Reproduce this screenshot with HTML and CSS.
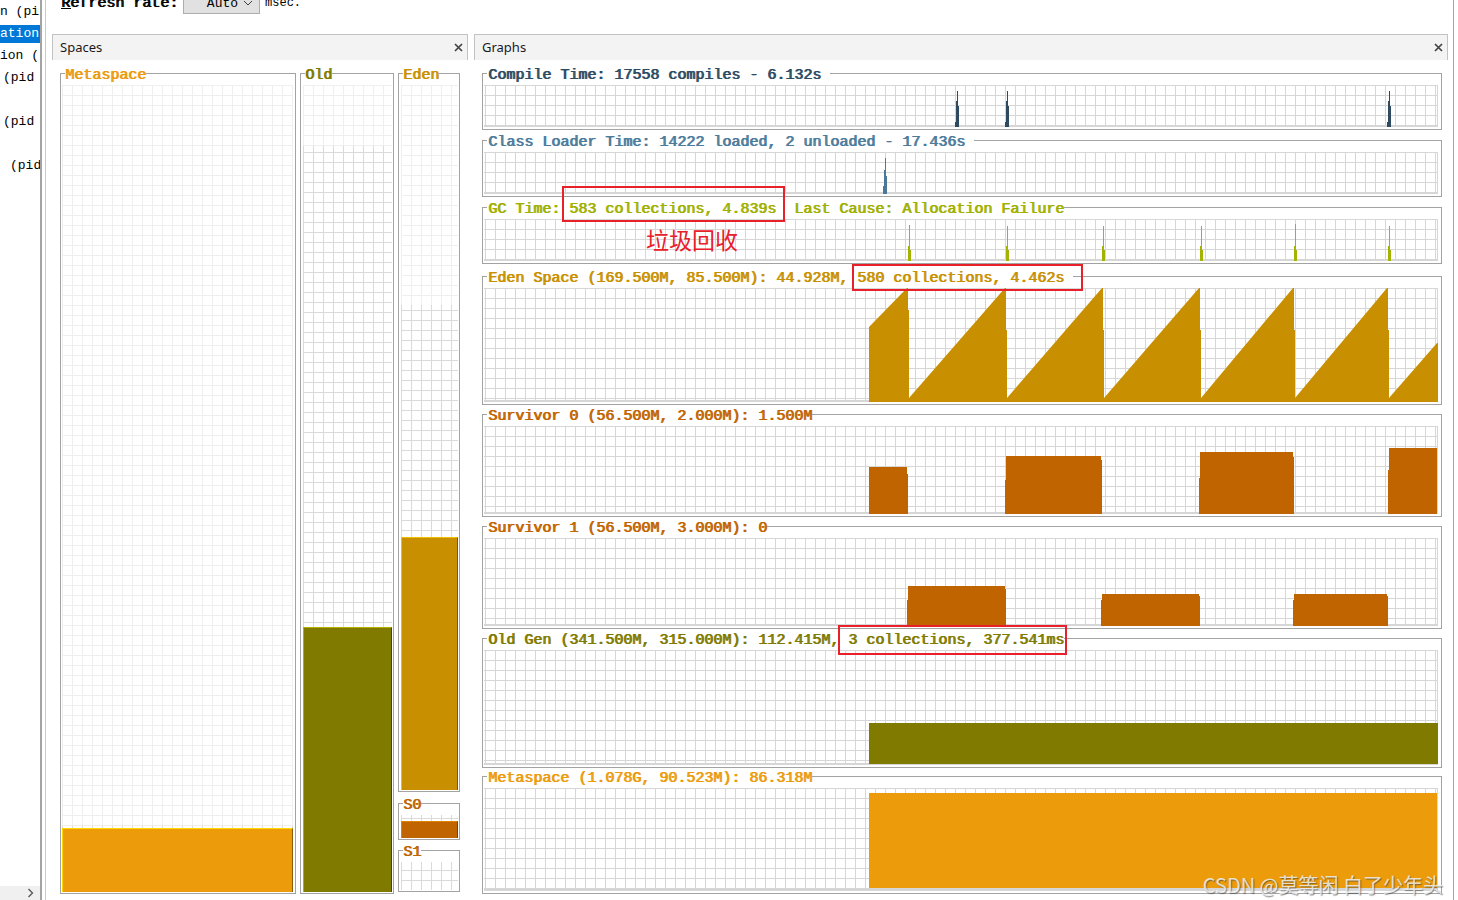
FILE: index.html
```html
<!DOCTYPE html>
<html>
<head>
<meta charset="utf-8">
<link rel="stylesheet" href="styles.css">
</head>
<body>
<div class="app">
  <aside class="sidebar">
    <div class="tree">
      <div class="item"><span class="row">n (pi</span></div>
      <div class="item sel"><span class="row">ation</span></div>
      <div class="item"><span class="row">ion (</span></div>
      <div class="item"><span class="row ind3">(pid</span></div>
      <div class="item"></div>
      <div class="item"><span class="row ind3">(pid</span></div>
      <div class="item"></div>
      <div class="item"><span class="row ind10">(pid</span></div>
    </div>
    <div class="side-foot">
      <svg width="7" height="10" viewBox="0 0 7 10"><path d="M1.5 1 L5.5 5 L1.5 9" fill="none" stroke="#555" stroke-width="1.3"/></svg>
    </div>
  </aside>
  <div class="divider"></div>
  <main class="main">
    <div class="toolbar">
      <span class="lbl"><u>R</u>efresh rate:</span>
      <span class="combo"><span>Auto</span><svg width="10" height="6" viewBox="0 0 10 6"><path d="M1 1 L5 5 L9 1" fill="none" stroke="#444" stroke-width="1"/></svg></span>
      <span class="unit">msec.</span>
    </div>
    <div class="panels">
      <section class="panel spaces">
        <header class="phead"><span>Spaces</span><svg class="close" width="9" height="9" viewBox="0 0 9 9"><path d="M1 1 L8 8 M8 1 L1 8" stroke="#444" stroke-width="1.7"/></svg></header>
        <div class="spaces-body">
          <div class="tb col-meta">
            <div class="tb-head"><span class="tb-title c-meta">Metaspace</span></div>
            <div class="tb-body sb-l"><div class="sgrid sg-big"><div class="commit cm-meta"><div class="fill f-meta"></div></div></div></div>
          </div>
          <div class="tb col-old">
            <div class="tb-head"><span class="tb-title c-old">Old</span></div>
            <div class="tb-body sb-r"><div class="sgrid sg-big"><div class="commit cm-old"><div class="fill f-old"></div></div></div></div>
          </div>
          <div class="eden-col">
            <div class="tb">
              <div class="tb-head"><span class="tb-title c-eden">Eden</span></div>
              <div class="tb-body sb-r"><div class="sgrid sg-eden"><div class="commit cm-eden"><div class="fill f-eden"></div></div></div></div>
            </div>
            <div class="tb s0">
              <div class="tb-head"><span class="tb-title c-surv">S0</span></div>
              <div class="tb-body sb-r"><div class="sgrid sg-s0"><div class="commit cm-full"><div class="fill f-s0"></div></div></div></div>
            </div>
            <div class="tb s1">
              <div class="tb-head"><span class="tb-title c-surv">S1</span></div>
              <div class="tb-body sb-r"><div class="sgrid sg-s1"><div class="commit cm-full"></div></div></div>
            </div>
          </div>
        </div>
      </section>

      <section class="panel graphs">
        <header class="phead"><span>Graphs</span><svg class="close" width="9" height="9" viewBox="0 0 9 9"><path d="M1 1 L8 8 M8 1 L1 8" stroke="#444" stroke-width="1.7"/></svg></header>
        <div class="graphs-body">
          <div class="tb">
            <div class="tb-head"><span class="tb-title gt t-compile">Compile Time: 17558 compiles - 6.132s </span></div>
            <div class="tb-body"><div class="ggrid h42">
              <svg viewBox="484 85 954 42" preserveAspectRatio="none"><g fill="#2d4a61">
                <polygon points="955,127 955,122 956,122 956,101 957,101 957,91 958,91 958,106 959,106 959,127"/>
                <polygon points="1005,127 1005,122 1006,122 1006,101 1007,101 1007,91 1008,91 1008,106 1009,106 1009,127"/>
                <polygon points="1387,127 1387,122 1388,122 1388,101 1389,101 1389,91 1390,91 1390,106 1391,106 1391,127"/>
              </g></svg>
            </div></div>
          </div>

          <div class="tb m4">
            <div class="tb-head"><span class="tb-title gt t-class">Class Loader Time: 14222 loaded, 2 unloaded - 17.436s </span></div>
            <div class="tb-body"><div class="ggrid h42">
              <svg viewBox="484 152 954 42" preserveAspectRatio="none"><g fill="#4b7a99">
                <polygon points="883,194 883,186 884,186 884,170 885,170 885,158 886,158 886,176 887,176 887,194"/>
              </g></svg>
            </div></div>
          </div>

          <div class="tb m4">
            <div class="tb-head"><span class="tb-title gt t-gc">GC Time: <span class="mark mark-gc">583 collections, 4.839s</span>  Last Cause: Allocation Failure</span></div>
            <div class="tb-body"><div class="ggrid h42 rel">
              <svg viewBox="484 219 954 42" preserveAspectRatio="none"><g fill="#a3b300">
                <polygon points="908,261 908,246 909,246 909,225 910,225 910,250 911,250 911,261"/>
                <polygon points="1006,261 1006,246 1007,246 1007,226 1008,226 1008,250 1009,250 1009,261"/>
                <polygon points="1102,261 1102,246 1103,246 1103,226 1104,226 1104,250 1105,250 1105,261"/>
                <polygon points="1200,261 1200,246 1201,246 1201,226 1202,226 1202,250 1203,250 1203,261"/>
                <polygon points="1294,261 1294,246 1295,246 1295,224 1296,224 1296,250 1297,250 1297,261"/>
                <polygon points="1388,261 1388,246 1389,246 1389,226 1390,226 1390,250 1391,250 1391,261"/>
              </g></svg>
              <span class="note">垃圾回收</span>
            </div></div>
          </div>

          <div class="tb m6">
            <div class="tb-head"><span class="tb-title gt t-eden">Eden Space (169.500M, 85.500M): 44.928M, <span class="mark mark-eden">580 collections, 4.462s</span> </span></div>
            <div class="tb-body"><div class="ggrid h114">
              <svg viewBox="484 288 954 114" preserveAspectRatio="none"><g fill="#c89000">
                <polygon points="869,402 869,327 907,288 908,288 908,310 909,310 909,398 1005,288 1006,288 1006,330 1007,330 1007,398 1102,288 1103,288 1103,330 1104,330 1104,398 1199,288 1200,288 1200,330 1201,330 1201,398 1293,288 1294,288 1294,330 1295,330 1295,398 1387,288 1388,288 1388,330 1389,330 1389,398 1437,343 1438,343 1438,402"/>
              </g></svg>
            </div></div>
          </div>

          <div class="tb m3">
            <div class="tb-head"><span class="tb-title gt t-surv">Survivor 0 (56.500M, 2.000M): 1.500M</span></div>
            <div class="tb-body"><div class="ggrid h88">
              <svg viewBox="484 426 954 88" preserveAspectRatio="none"><g fill="#c06400">
                <polygon points="869,514 869,467 907,467 907,474 908,474 908,514"/>
                <polygon points="1005,514 1005,480 1006,480 1006,456 1101,456 1101,460 1102,460 1102,514"/>
                <polygon points="1199,514 1199,478 1200,478 1200,452 1293,452 1293,457 1294,457 1294,514"/>
                <polygon points="1388,514 1388,470 1389,470 1389,448 1437,448 1437,514"/>
              </g></svg>
            </div></div>
          </div>

          <div class="tb m3">
            <div class="tb-head"><span class="tb-title gt t-surv">Survivor 1 (56.500M, 3.000M): 0</span></div>
            <div class="tb-body"><div class="ggrid h88">
              <svg viewBox="484 538 954 88" preserveAspectRatio="none"><g fill="#c06400">
                <polygon points="907,626 907,600 908,600 908,586 1005,586 1005,589 1006,589 1006,626"/>
                <polygon points="1101,626 1101,600 1102,600 1102,594 1199,594 1199,596 1200,596 1200,626"/>
                <polygon points="1293,626 1293,600 1294,600 1294,594 1387,594 1387,596 1388,596 1388,626"/>
              </g></svg>
            </div></div>
          </div>

          <div class="tb m3">
            <div class="tb-head"><span class="tb-title gt t-old">Old Gen (341.500M, 315.000M): 112.415M, <span class="mark mark-old">3 collections, 377.541ms</span></span></div>
            <div class="tb-body"><div class="ggrid h115">
              <svg viewBox="484 650 954 115" preserveAspectRatio="none"><g fill="#807a00">
                <rect x="869" y="723" width="569" height="41"/>
              </g></svg>
            </div></div>
          </div>

          <div class="tb m2">
            <div class="tb-head"><span class="tb-title gt t-meta">Metaspace (1.078G, 90.523M): 86.318M</span></div>
            <div class="tb-body"><div class="ggrid h103">
              <svg viewBox="484 788 954 103" preserveAspectRatio="none"><g fill="#ec9c0a">
                <rect x="869" y="793" width="568" height="95"/>
              </g></svg>
            </div></div>
          </div>
        </div>
      </section>
    </div>
  </main>
  <div class="watermark">CSDN @莫等闲 白了少年头</div>
</div>
</body>
</html>
```

FILE: styles.css
```css
* { box-sizing: border-box; }
html, body { margin: 0; padding: 0; background: #fff; }
body { width: 1458px; height: 900px; overflow: hidden; font-family: "Liberation Mono", monospace; color: #000; }

.app { position: relative; display: flex; width: 1458px; height: 900px; overflow: hidden; background: #fff; }

/* sidebar */
.sidebar { width: 40px; flex: none; display: flex; flex-direction: column; justify-content: space-between; overflow: hidden; font-size: 13px; }
.tree { padding-top: 1px; }
.item { height: 22px; display: flex; align-items: center; }
.row { display: block; width: 100%; height: 18px; line-height: 18px; white-space: pre; }
.item.sel .row { background: #0078d7; color: #fff; }
.ind3 { padding-left: 3px; }
.ind10 { padding-left: 10px; }
.side-foot { height: 14px; background: #f0f0f0; display: flex; align-items: center; justify-content: flex-end; padding-right: 6px; }

.divider { width: 6px; flex: none; border-left: 2px solid #a3a3a3; border-right: 1px solid #cacaca; }

/* main */
.main { width: 1408px; flex: none; border-right: 1px solid #a6a6a6; display: flex; flex-direction: column; }
.toolbar { margin-top: -8px; height: 22px; flex: none; display: flex; align-items: center; padding-left: 15px; }
.lbl { font-weight: normal; font-size: 15px; white-space: pre; text-shadow: 1px 0 0 currentColor; }
.combo { margin-left: 5px; width: 77px; height: 22px; background: #e1e1e1; border: 1px solid #adadad; display: flex; align-items: center; justify-content: flex-end; gap: 5px; padding-right: 6px; font-size: 13px; }
.unit { margin-left: 5px; font-size: 12px; }

.panels { margin-top: 20px; display: flex; gap: 6px; padding-left: 6px; flex: 1; min-height: 0; }
.panel { display: flex; flex-direction: column; }
.spaces { width: 416px; }
.graphs { width: 974px; }
.phead { height: 26px; flex: none; background: #f3f3f3; border: 1px solid #c2c2c2; border-bottom: none; display: flex; align-items: center; justify-content: space-between; padding: 0 4px 1px 7px; font-family: "Noto Sans", sans-serif; font-size: 13px; color: #1a1a1a; }

/* titled border */
.tb { display: flex; flex-direction: column; }
.tb-head { height: 14px; display: flex; flex: none; }
.tb-head::before { content: ""; width: 4px; height: 7px; align-self: flex-end; border-top: 1px solid #a3a3a3; border-left: 1px solid #a3a3a3; }
.tb-head::after { content: ""; flex: 1; height: 7px; align-self: flex-end; border-top: 1px solid #a3a3a3; border-right: 1px solid #a3a3a3; }
.tb-title { font-weight: normal; font-size: 15px; line-height: 18px; height: 14px; white-space: pre; text-shadow: 1px 0 0 currentColor; }
.tb-title.gt { margin-left: 1px; }
.tb-body { border: 1px solid #a3a3a3; border-top: none; padding: 4px 3px 2px 1px; }

/* spaces */
.spaces-body { display: flex; gap: 4px; padding: 7px 0 0 8px; }
.col-meta { width: 236px; }
.col-old { width: 94px; }
.eden-col { width: 62px; display: flex; flex-direction: column; }
.s0 { margin-top: 5px; }
.s1 { margin-top: 4px; }
.sb-l { padding: 4px 2px 1px 1px; }
.sb-r { padding: 4px 1px 1px 2px; }

.sgrid { display: flex; flex-direction: column; justify-content: flex-end;
  background-color: #fff;
  background-image: linear-gradient(to right, #efefef 1px, transparent 1px), linear-gradient(to bottom, #efefef 1px, transparent 1px);
  background-size: 10px 10px; }
.sg-big { height: 807px; }
.sg-eden { height: 705px; }
.sg-s0 { height: 23px; }
.sg-s1 { height: 28px; }
.commit { display: flex; flex-direction: column; justify-content: flex-end;
  background-color: #fff;
  background-image: linear-gradient(to right, #dadada 1px, transparent 1px), linear-gradient(to bottom, #dadada 1px, transparent 1px);
  background-size: 10px 10px; background-position: 0 bottom; }
.cm-meta { height: 66px; }
.cm-old { height: 746px; }
.cm-eden { height: 485px; }
.cm-full { height: 100%; }
.fill { border-top: 1px solid; border-left: 1px solid; border-right: 1px solid; }
.f-meta { height: 64px; background: #ec9c0a; border-top-color: #ffd800; border-left-color: #ffd800; border-right-color: #8a5c00; }
.f-old { height: 265px; background: #807a00; border-top-color: #b4b000; border-left-color: #b4b000; border-right-color: #4a4600; }
.f-eden { height: 253px; background: #c89000; border-top-color: #f0c000; border-left-color: #f0c000; border-right-color: #7a5800; }
.f-s0 { height: 17px; background: #c06400; border-top-color: #e08000; border-left-color: #e08000; border-right-color: #7a3c00; }

.c-meta { color: #eb9b0c; }
.c-old { color: #807a00; }
.c-eden { color: #c89000; }
.c-surv { color: #c06400; }

/* graphs */
.graphs-body { display: flex; flex-direction: column; padding: 7px 6px 0 8px; }
.m2 { margin-top: 2px; }
.m3 { margin-top: 3px; }
.m4 { margin-top: 4px; }
.m6 { margin-top: 6px; }
.ggrid { background-color: #fff;
  background-image: linear-gradient(to right, #d6d6d6 1px, transparent 1px), linear-gradient(to bottom, #d6d6d6 1px, transparent 1px);
  background-size: 10px 10px; background-position: 1px 0;
  box-shadow: inset 0 -2px 0 #d6d6d6, inset -1px 0 0 #d6d6d6; }
.ggrid svg { display: block; width: 100%; height: 100%; }
.rel { position: relative; }
.h42 { height: 42px; }
.h88 { height: 88px; }
.h103 { height: 103px; }
.h114 { height: 114px; }
.h115 { height: 115px; }

.t-compile { color: #2c4a62; }
.t-class { color: #4c7b9b; }
.t-gc { color: #9fb000; }
.t-eden { color: #c89000; }
.t-surv { color: #c06400; }
.t-old { color: #807a00; }
.t-meta { color: #eb9b0c; }

.mark { position: relative; z-index: 1; border: 2px solid #e8202a; text-shadow: 1px 0 0 currentColor; }
.mark-gc { padding: 13px 7px 2px 5px; margin: 0 -9px 0 -7px; }
.mark-eden { padding: 4px 17px 2px 3px; margin: 0 -19px 0 -5px; }
.mark-old { padding: 5px 1px 4px 8px; margin: 0 -3px 0 -10px; }

.note { position: absolute; left: 162px; top: 9px; font-family: "Noto Sans CJK SC", sans-serif; font-size: 23px; line-height: 1; color: #e8202a; text-shadow: none; }

.watermark { position: absolute; right: 15px; bottom: 5px; font-family: "Noto Sans CJK SC", sans-serif; font-size: 20px; line-height: 1; color: rgba(240,240,240,0.85); text-shadow: 1px 1px 1px rgba(60,60,60,0.6); white-space: pre; }
```
